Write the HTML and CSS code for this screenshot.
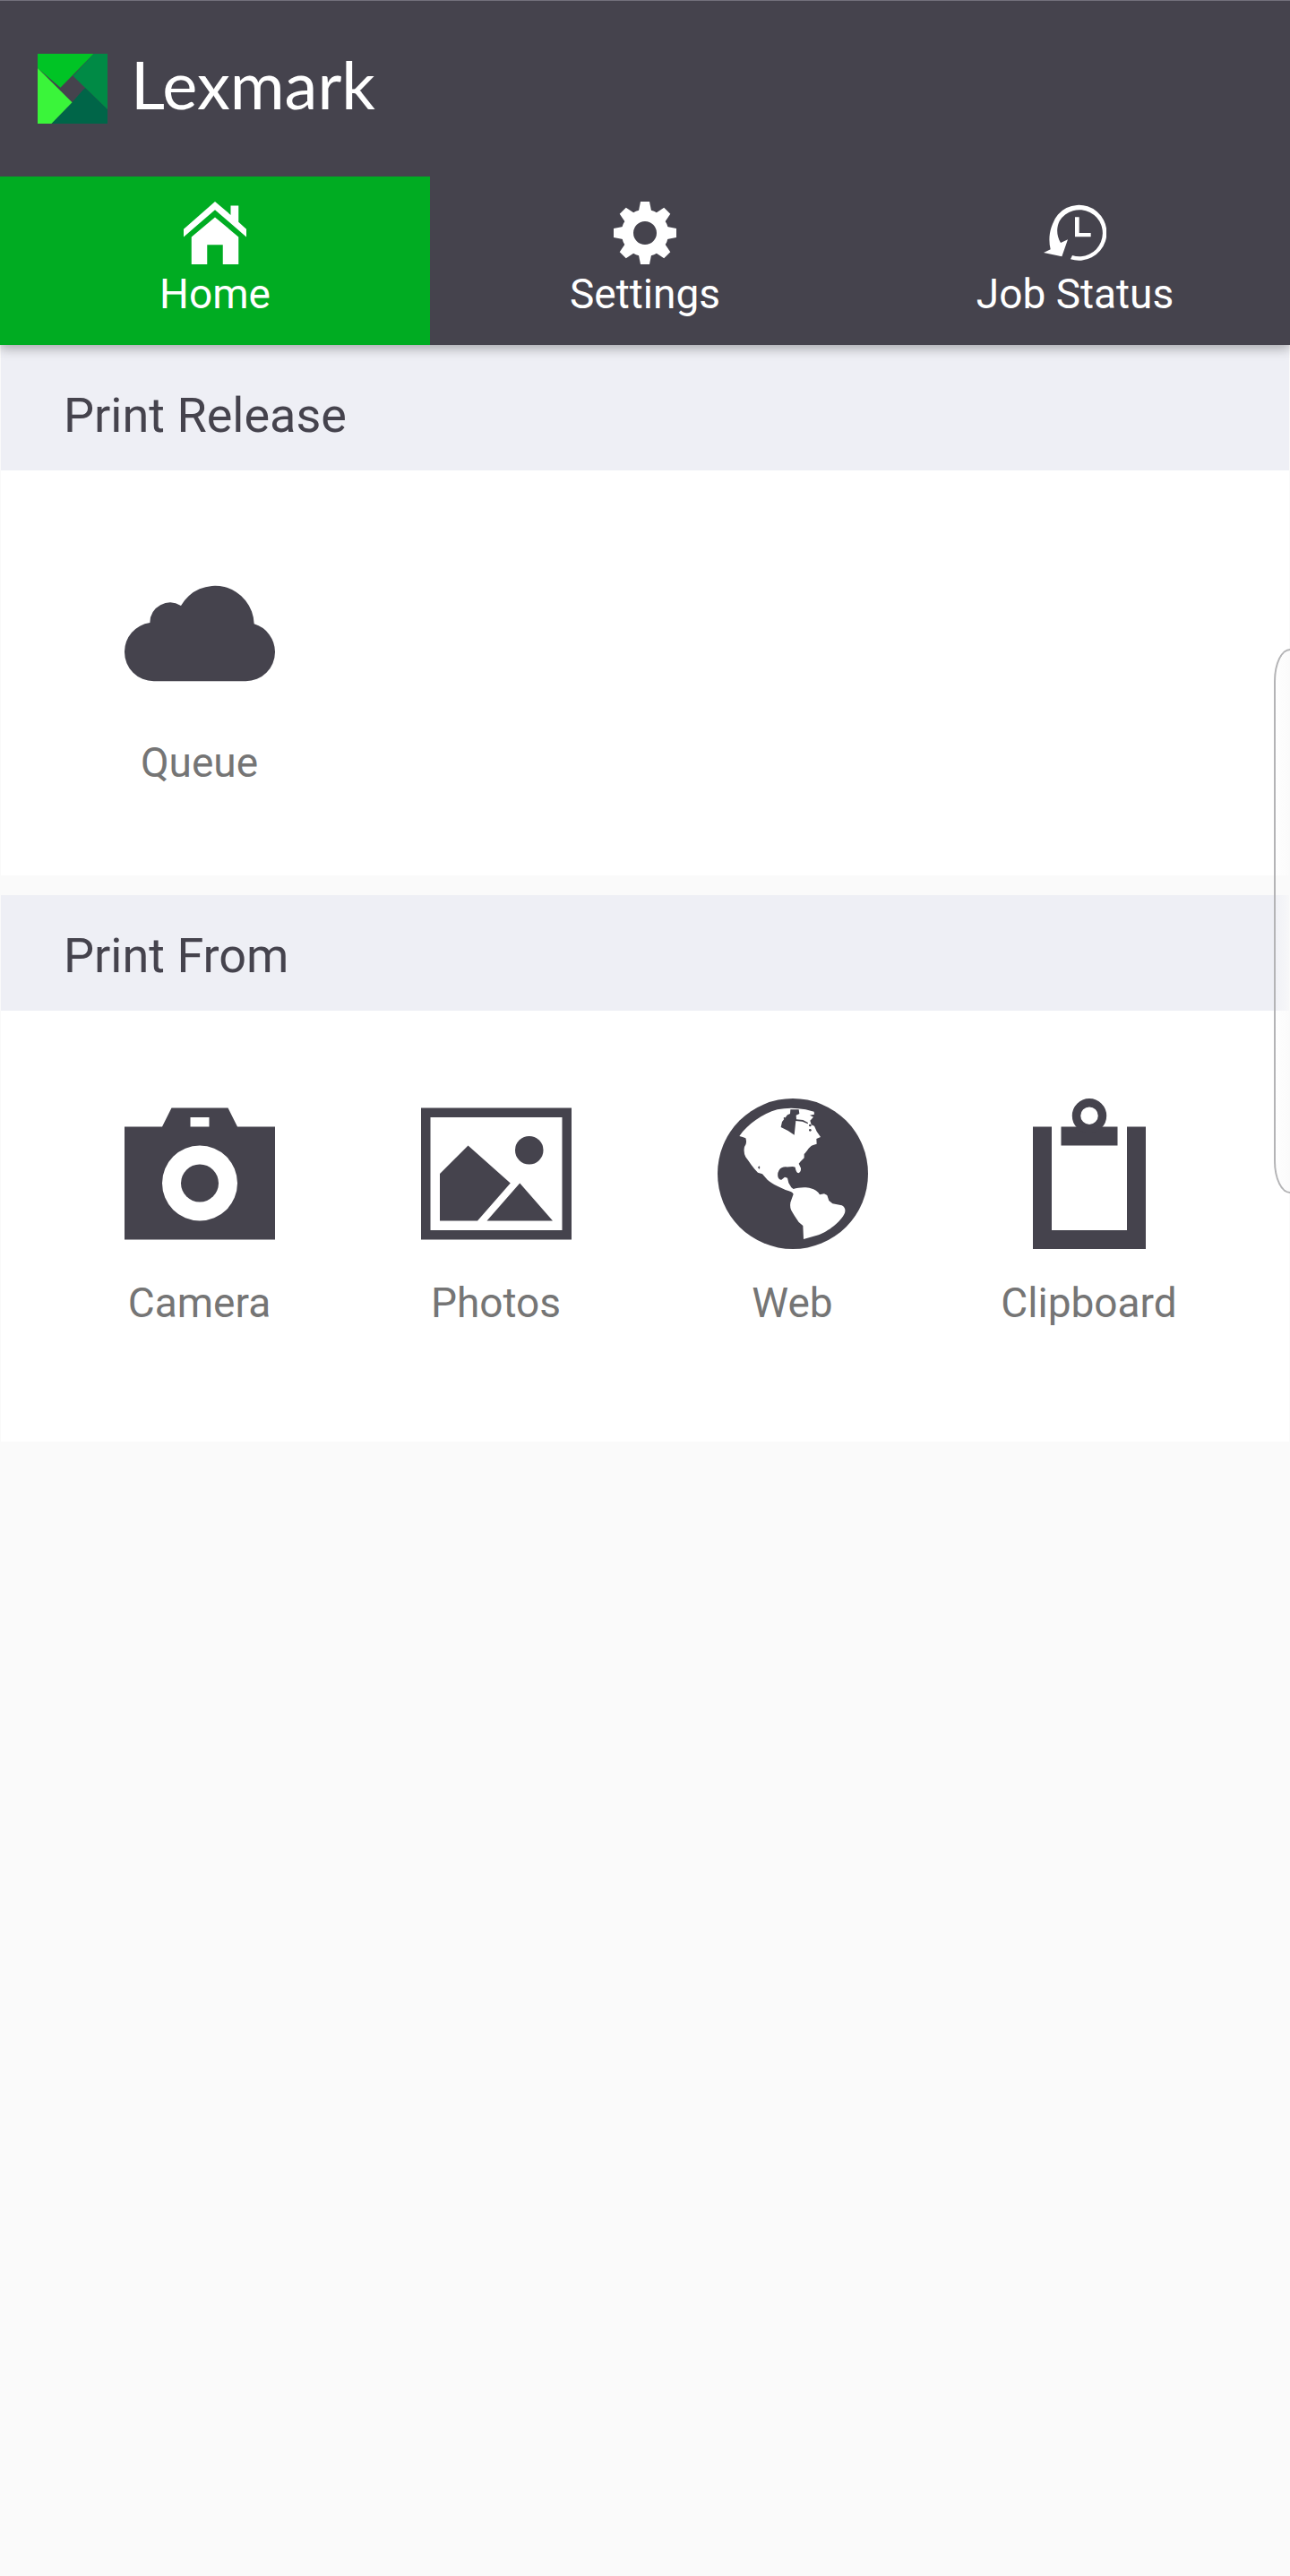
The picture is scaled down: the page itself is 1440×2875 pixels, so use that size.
FILE: index.html
```html
<!DOCTYPE html>
<html lang="en">
<head>
    <meta charset="utf-8">
    <meta name="viewport" content="width=device-width, initial-scale=1">
    <title>Lexmark</title>
    <link rel="stylesheet" href="styles.css">
</head>
<body>
    <header class="app-header">
        <div class="brand">
            <svg class="brand-mark" viewBox="128 180 233 233" aria-hidden="true">
                <polygon fill="#00c425" points="128,180 315,180 204,293 128,228"/>
                <polygon fill="#008a45" points="315,180 361,180 361,366 246,254"/>
                <polygon fill="#006548" points="361,366 361,413 174,413 243,342 281,299 287,294"/>
                <polygon fill="#3af53a" points="128,228 243,342 174,413 128,413"/>
            </svg>
            <span class="brand-name">Lexmark</span>
        </div>

        <nav class="tabs">
            <a class="tab active" href="#home">
                <svg class="tab-icon" viewBox="0 0 16 16" aria-hidden="true">
                    <path d="M8 0l4 3.4V1h2v4.2L16 7v2L8 2.1 0 9V7z"/>
                    <path d="M8 4l6 5v7h-4v-5H6v5H2V9z"/>
                </svg>
                <span>Home</span>
            </a>
            <a class="tab" href="#settings">
                <svg class="tab-icon" viewBox="-105 -105 210 210" aria-hidden="true">
                    <defs>
                        <path id="tooth" d="M-15-105h30l6 31h-42z"/>
                    </defs>
                    <path fill-rule="evenodd" d="M0-79A79 79 0 1 1 0 79 79 79 0 1 1 0-79zM0-39A39 39 0 1 0 0 39 39 39 0 1 0 0-39z"/>
                    <use href="#tooth"/>
                    <use href="#tooth" transform="rotate(45)"/>
                    <use href="#tooth" transform="rotate(90)"/>
                    <use href="#tooth" transform="rotate(135)"/>
                    <use href="#tooth" transform="rotate(180)"/>
                    <use href="#tooth" transform="rotate(225)"/>
                    <use href="#tooth" transform="rotate(270)"/>
                    <use href="#tooth" transform="rotate(315)"/>
                </svg>
                <span>Settings</span>
            </a>
            <a class="tab" href="#jobs">
                <svg class="tab-icon" viewBox="315 75 210 210" aria-hidden="true">
                    <path d="M405 268A93 93 0 1 0 345 150C334 175 331 205 338 235L315 246 376 259 396 202 372 213C358 190 357 163 368 140A78 78 0 1 1 411 255z"/>
                    <path d="M420 127h14v53h39v13h-53z"/>
                </svg>
                <span>Job Status</span>
            </a>
        </nav>
    </header>

    <main>
        <section class="panel">
            <h2 class="panel-title under-tabs">Print Release</h2>
            <div class="tiles">
                <a class="tile" href="#queue">
                    <svg class="tile-icon" viewBox="114 6 504 504" aria-hidden="true">
                        <path d="M212 418A98 98 0 0 1 114 320 98 98 0 0 1 199 222 68 68 0 0 1 303 165 131 131 0 0 1 548 226 98 98 0 0 1 618 320 98 98 0 0 1 520 418z"/>
                    </svg>
                    <span>Queue</span>
                </a>
            </div>
        </section>

        <section class="panel">
            <h2 class="panel-title">Print From</h2>
            <div class="tiles last">
                <a class="tile" href="#camera">
                    <svg class="tile-icon" viewBox="0 0 16 16" aria-hidden="true">
                        <path fill-rule="evenodd" d="M0 3h4l1-2h6l1 2h4v12H0zM7 2v1h2V2zM8 5a4 4 0 1 0 0 8 4 4 0 1 0 0-8z"/>
                        <circle cx="8" cy="9" r="2"/>
                    </svg>
                    <span>Camera</span>
                </a>
                <a class="tile" href="#photos">
                    <svg class="tile-icon" viewBox="0 0 16 16" aria-hidden="true">
                        <path fill-rule="evenodd" d="M0 1h16v14H0zM1 2v12h14V2z"/>
                        <path d="M2 8l3-3 4.500 4L6 13H2zM10.500 9L14 13H7z"/>
                        <circle cx="11.500" cy="5.500" r="1.500"/>
                    </svg>
                    <span>Photos</span>
                </a>
                <a class="tile" href="#web">
                    <svg class="tile-icon" viewBox="90 78 504 504" aria-hidden="true">
                        <circle cx="342" cy="330" r="252"/>
                        <!-- North and South America -->
                        <path class="land" d="M163 204C190 165 240 129 290 115Q335 105 385 115L413 122 414 131 399 134 411 140 400 152 404 166 414 170 422 188 435 207 421 213 422 230 408 235C395 241 391 254 380 264L380 277 368 289 362 296 369 311Q370 324 361 328 352 325 350 308C342 303 330 308 318 307Q303 307 296 318 289 330 293 343 297 352 304 350L315 341 324 344 328 361 337 376 344 381C360 376 386 373 402 379Q422 383 432 400L447 397 457 402 463 420 475 430 506 436Q521 444 516 461C504 490 460 523 428 535L378 549 376 504 362 492Q345 468 336 451 330 433 337 418L344 398Q341 391 327 387C302 378 273 364 257 350L240 331 225 326C208 311 198 292 184 274Q176 259 180 240 190 228 184 211L174 207z"/>
                        <!-- Hudson Bay and small lakes -->
                        <path d="M334 115h28l2 14-11 5 1 14 22 2 17 9-1 4-18-8-22-2-5 47-21-14-24-12 4-18 18-23 9-4z"/>
                        <circle cx="400" cy="168" r="4"/>
                        <circle cx="400" cy="184" r="4"/>
                        <circle cx="314" cy="144" r="3"/>
                        <path d="M225 308l5-4 2 5-3 6z"/>
                    </svg>
                    <span>Web</span>
                </a>
                <a class="tile" href="#clipboard">
                    <svg class="tile-icon" viewBox="0 0 16 16" aria-hidden="true">
                        <path d="M2 3h2v11h8V3h2v13H2zM5 3h6v2H5z"/>
                        <circle cx="8" cy="1.830" r="1.380" fill="none" stroke="currentColor" stroke-width=".9"/>
                    </svg>
                    <span>Clipboard</span>
                </a>
            </div>
        </section>
    </main>

    <div class="edge-handle"></div>
</body>
</html>
```

FILE: styles.css
```css
* {
    box-sizing: border-box;
}

body {
    position: relative;
    min-height: 100vh;
    margin: 0;
    background-color: #fafafa;
    font-family: Roboto, "Liberation Sans", sans-serif;
    overflow-x: hidden;
}

a {
    color: inherit;
    text-decoration: none;
}

svg {
    display: block;
    fill: currentColor;
}

/* Header */
.app-header {
    position: relative;
    background-color: #45434d;
    border-top: 1px solid #73717c;
    color: #fff;
    box-shadow: 0 4px 12px rgba(0, 0, 0, 0.3);
}

.brand {
    display: flex;
    align-items: flex-start;
    gap: 26px;
    padding: 59px 42px;
}

.brand-mark {
    width: 78px;
    height: 78px;
}

.brand-name {
    font-family: Lato, sans-serif;
    font-size: 74px;
    line-height: 68px;
}

.tabs {
    display: flex;
}

.tab {
    flex: 1;
    display: flex;
    flex-direction: column;
    align-items: center;
    gap: 6px;
    padding: 28px 0 30px;
    font-size: 46px;
    line-height: 54px;
}

.tab.active {
    background-color: #00ac22; /* Green for the open tab */
}

.tab-icon {
    width: 70px;
    height: 70px;
}

/* Sections */
.panel {
    margin: 0 1px 22px;
    background-color: #fff;
}

.panel-title {
    margin: 0;
    padding: 36px 70px 29px;
    background-color: #eeeff5;
    color: #45434d;
    font-size: 54px;
    font-weight: normal;
    line-height: 64px;
}

.panel-title.under-tabs {
    padding-top: 47px; /* extra room for the header shadow */
}

.tiles {
    display: grid;
    grid-template-columns: repeat(4, 1fr);
    padding: 98px 58px 99px 56px;
}

.tiles.last {
    padding-bottom: 128px;
}

.tile {
    display: flex;
    flex-direction: column;
    align-items: center;
    gap: 33px;
    color: #757575;
    font-size: 46px;
    line-height: 54px;
}

.tile-icon {
    width: 168px;
    height: 168px;
    color: #45434d;
}

.land {
    fill: #fff;
}

/* Edge panel handle, floats over the page */
.edge-handle {
    position: absolute;
    top: 724px;
    right: 0;
    width: 18px;
    height: 608px;
    border: 2px solid #b4b4b6;
    border-right: none;
    border-radius: 18px 0 0 18px / 36px 0 0 36px;
    background: linear-gradient(to right, rgba(250, 250, 250, 0.2), rgba(250, 250, 250, 0.8));
}
```
